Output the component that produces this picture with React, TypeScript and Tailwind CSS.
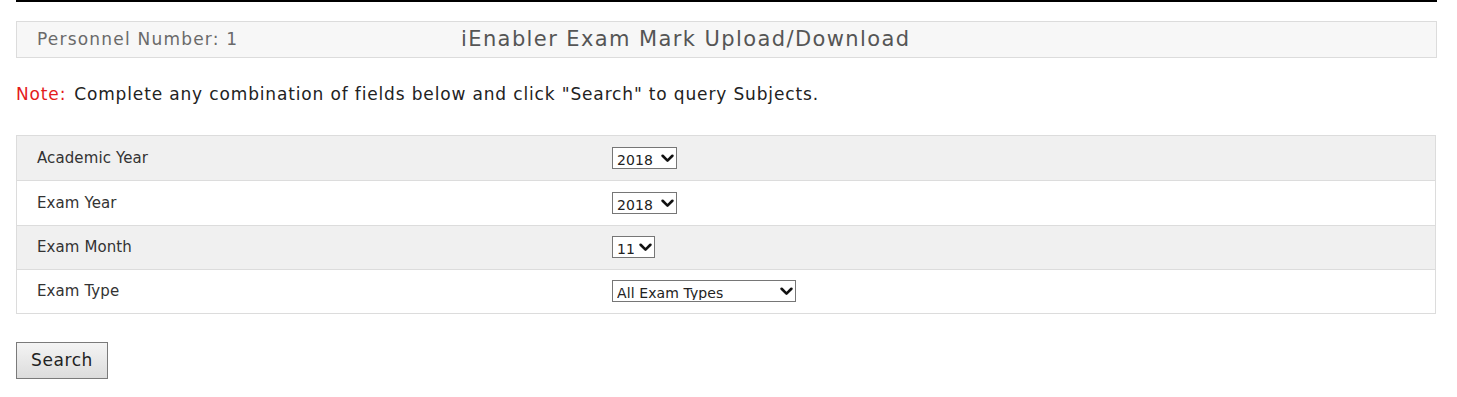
import { useState } from "react"

const font = "font-['DejaVu_Sans',sans-serif]"

function Chevron() {
  return (
    <svg viewBox="0 0 12 8" className="h-[9px] w-[13px]" fill="none" stroke="#111" strokeWidth="2.4" strokeLinecap="round" strokeLinejoin="round">
      <path d="M1.5 1.5 L6 6 L10.5 1.5" />
    </svg>
  )
}

function Select({ value, options, width }: { value: string; options: string[]; width: string }) {
  const [v, setV] = useState(value)
  return (
    <div className={`relative h-[22px] ${width} border border-[#767676] bg-white`}>
      <select
        value={v}
        onChange={(e) => setV(e.target.value)}
        className={`h-full w-full appearance-none bg-transparent pb-[2px] pl-[4px] pr-[20px] text-[14px] leading-none tracking-[0.1px] text-[#222] outline-none ${font}`}
      >
        {options.map((o) => (
          <option key={o}>{o}</option>
        ))}
      </select>
      <span className="pointer-events-none absolute right-[2px] top-[6px]">
        <Chevron />
      </span>
    </div>
  )
}

const rows = [
  { label: "Academic Year", value: "2018", options: ["2017", "2018", "2019"], width: "w-[65px]" },
  { label: "Exam Year", value: "2018", options: ["2017", "2018", "2019"], width: "w-[65px]" },
  { label: "Exam Month", value: "11", options: ["1", "6", "11"], width: "w-[43px]" },
  { label: "Exam Type", value: "All Exam Types", options: ["All Exam Types", "Main", "Supplementary"], width: "w-[184px]" },
]

export default function App() {
  return (
    <div className={`min-h-screen bg-white px-[16px] ${font}`}>
      <div className="h-[2px] w-[1421px] bg-black" />

      {/* Page heading */}
      <div className="mt-[19px] flex h-[37px] w-[1421px] items-center border border-[#dcdcdc] bg-[#f7f7f7]">
        <div className="w-[444px] pl-[20px] text-[17px] tracking-[1.2px] text-[#6a6a6a]">Personnel Number: 1</div>
        <div className="text-[21px] tracking-[1.4px] text-[#555]">iEnabler Exam Mark Upload/Download</div>
      </div>

      <p className="mt-[24px] h-[25px] text-[17px] leading-[25px] tracking-[0.85px] text-[#222]">
        <span className="text-[#e41b1b]">Note:</span>
        <span className="ml-[8px]">Complete any combination of fields below and click "Search" to query Subjects.</span>
      </p>

      {/* Search fields */}
      <div className="mt-[28px] w-[1420px] border border-[#dcdcdc]">
        {rows.map((r, i) => (
          <div
            key={r.label}
            className={`flex h-[44.25px] items-center ${i > 0 ? "border-t border-[#dcdcdc]" : ""} ${i % 2 === 0 ? "bg-[#f0f0f0]" : "bg-white"}`}
          >
            <div className="w-[595px] pl-[20px] text-[15px] tracking-[0.1px] text-[#333]">{r.label}</div>
            <Select value={r.value} options={r.options} width={r.width} />
          </div>
        ))}
      </div>

      <button className="mt-[28px] h-[37px] w-[92px] border border-[#7a7a7a] bg-gradient-to-b from-[#f4f4f4] to-[#dcdcdc] text-[17px] tracking-[0.6px] text-[#222]">
        Search
      </button>
    </div>
  )
}
